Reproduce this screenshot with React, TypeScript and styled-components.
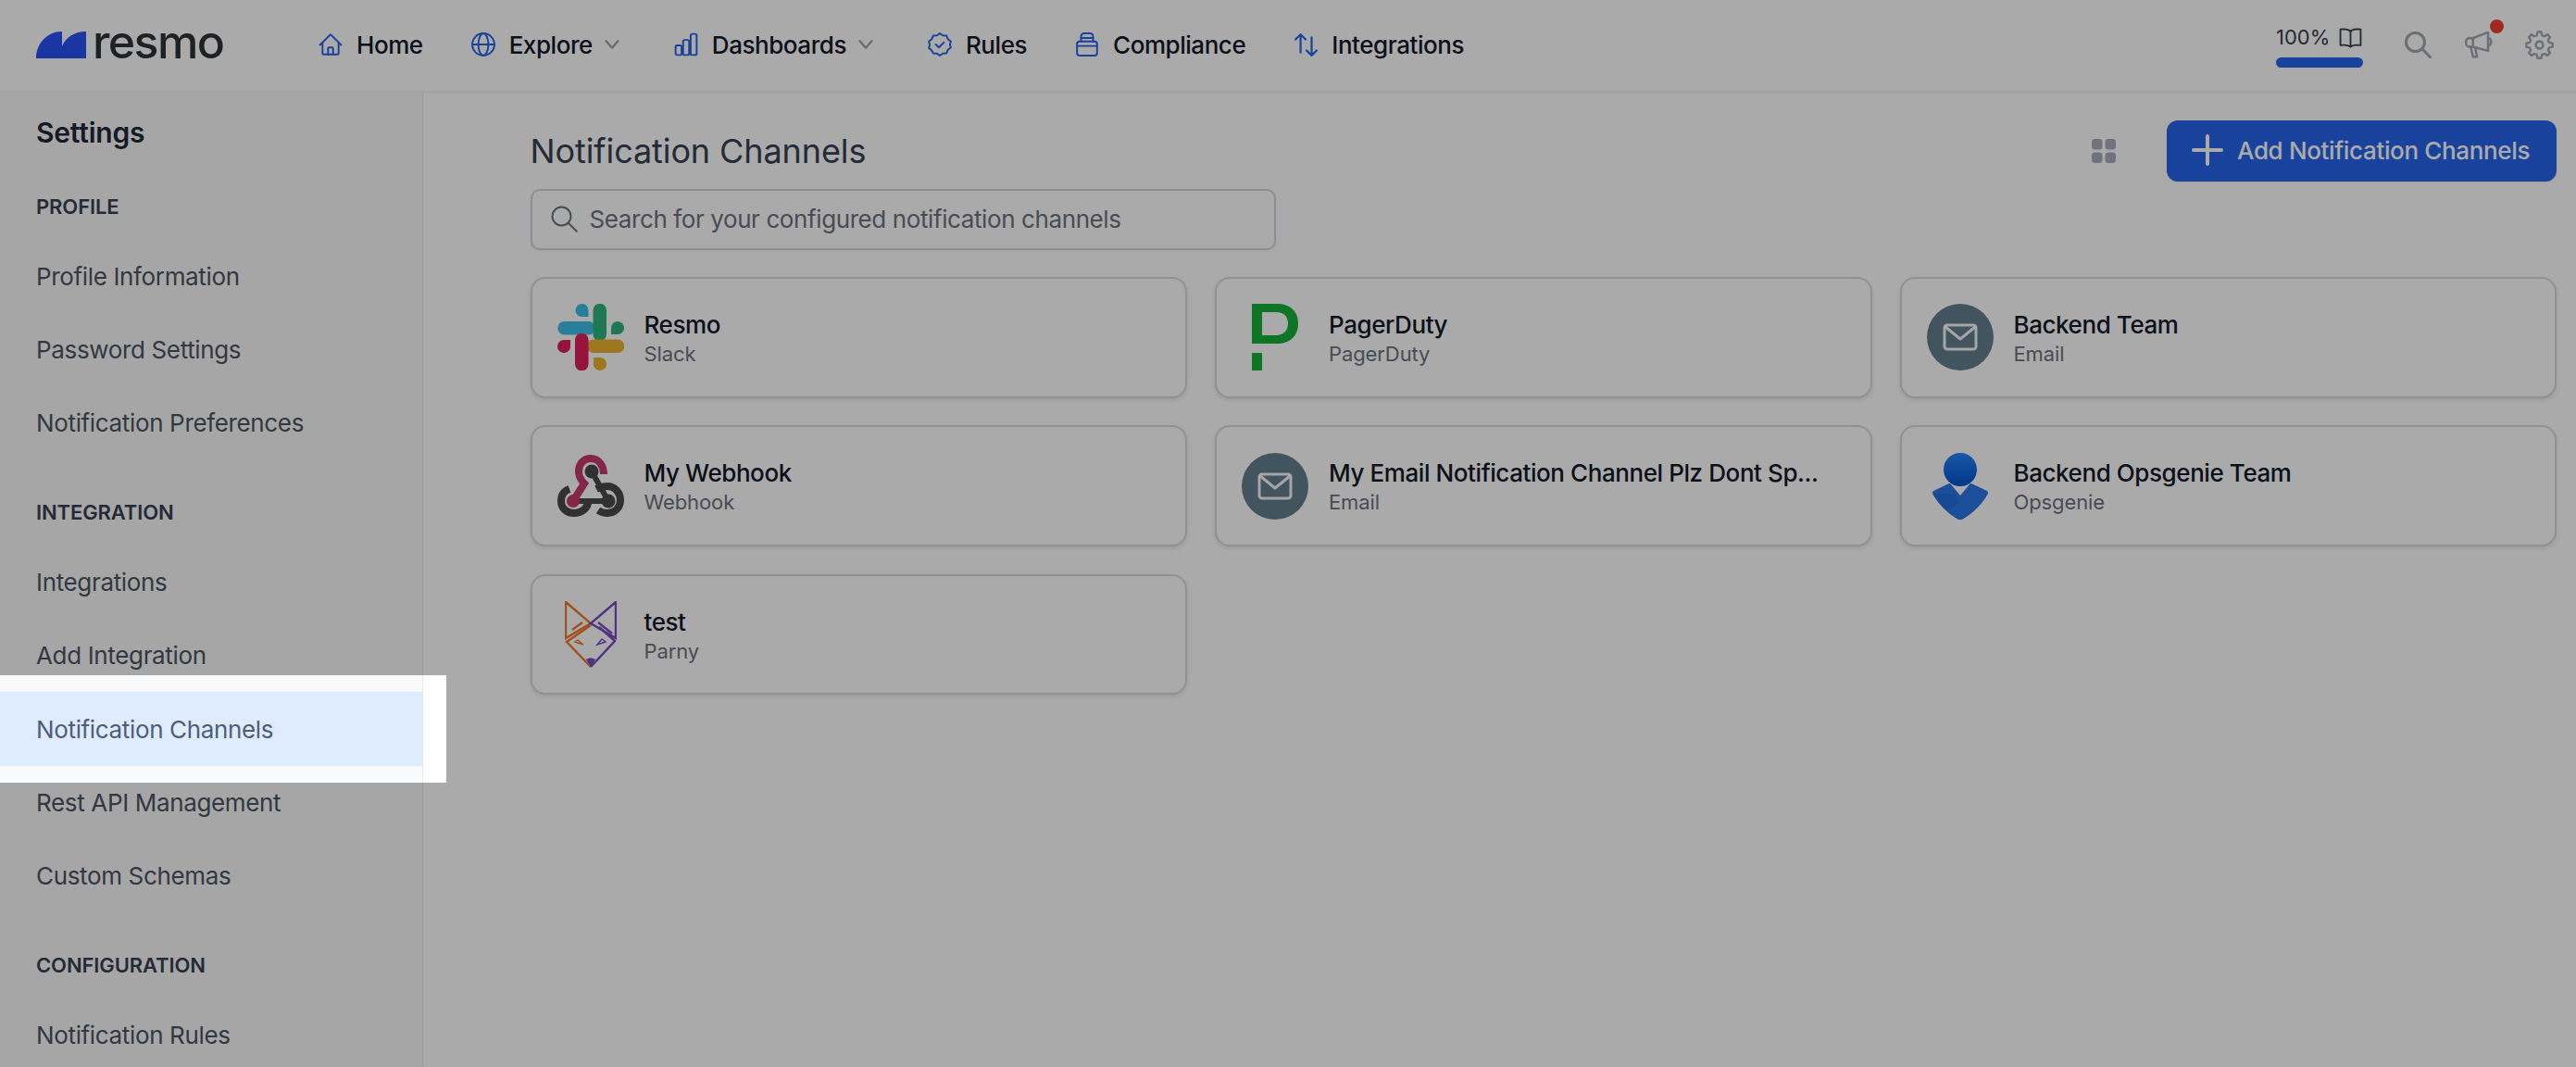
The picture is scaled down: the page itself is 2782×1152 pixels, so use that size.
import React from "react";
import styled, { createGlobalStyle } from "styled-components";

const Global = createGlobalStyle`
  html, body { margin: 0; padding: 0; background: #fff; }
  * { box-sizing: border-box; }
  body { font-family: Inter, "Noto Sans", sans-serif; }
`;

const Page = styled.div`
  position: relative;
  width: 2782px;
  height: 1152px;
  overflow: hidden;
  background: #fff;
  display: flex;
  flex-direction: column;
`;

const Spotlight = styled.div`
  position: absolute;
  left: 0;
  top: 729px;
  width: 482px;
  height: 116px;
  box-shadow: 0 0 0 4000px rgba(0, 0, 0, 0.335);
  pointer-events: none;
`;

const Header = styled.header`
  flex: 0 0 100px;
  display: flex;
  align-items: center;
  padding: 0 24px 2px 39px;
  border-bottom: 2px solid #f3f4f6;
`;

const Logo = styled.div`
  display: flex;
  align-items: center;
  gap: 7px;
  width: 305px;
  height: 60px;
`;

const LogoText = styled.span`
  font-size: 50px;
  font-weight: 500;
  line-height: 1;
  letter-spacing: -1.6px;
  color: #2f3437;
  position: relative;
  top: -3px;
`;

const Nav = styled.nav`
  display: flex;
  align-items: center;
  gap: 52px;
`;

const NavItem = styled.a`
  display: flex;
  align-items: center;
  gap: 15px;
  font-size: 26px;
  font-weight: 500;
  letter-spacing: -0.45px;
  color: #111827;
  white-space: nowrap;
  svg { flex: none; }
`;

const Chevron = styled.svg`
  margin-left: -5px;
  margin-right: 4px;
`;

const HeaderRight = styled.div`
  margin-left: auto;
  display: flex;
  align-items: center;
`;

const Usage = styled.div`
  width: 94px;
  display: flex;
  flex-direction: column;
  gap: 9px;
  margin-right: 44px;
  position: relative;
  top: 2px;
`;

const UsageTop = styled.div`
  display: flex;
  align-items: center;
  justify-content: space-between;
  font-size: 22px;
  line-height: 24px;
  color: #374151;
  padding-right: 1px;
`;

const UsageBar = styled.div`
  height: 11px;
  border-radius: 6px;
  background: #2563eb;
`;

const IconButton = styled.div<{ $mr: number }>`
  position: relative;
  display: flex;
  color: #a3a8b2;
  margin-right: ${(p) => p.$mr}px;
`;

const Dot = styled.span`
  position: absolute;
  right: -12px;
  top: -12px;
  width: 15px;
  height: 15px;
  border-radius: 50%;
  background: #ef4030;
`;

const Body = styled.div`
  flex: 1;
  min-height: 0;
  display: flex;
`;

const Sidebar = styled.aside`
  flex: 0 0 457px;
  background: #f9fafb;
  border-right: 1px solid #e5e7eb;
  padding-top: 25px;
`;

const SideTitle = styled.div`
  padding-left: 39px;
  font-size: 30px;
  line-height: 36px;
  font-weight: 600;
  letter-spacing: -0.2px;
  color: #1f2937;
  margin-bottom: 47px;
`;

const SideHeading = styled.div<{ $first?: boolean }>`
  padding: ${(p) => (p.$first ? "0" : "42px")} 0 21px 39px;
  font-size: 22px;
  line-height: 30px;
  font-weight: 600;
  letter-spacing: -0.1px;
  color: #374151;
`;

const SideItem = styled.div<{ $active?: boolean }>`
  height: 79.1px;
  display: flex;
  align-items: center;
  padding-left: 39px;
  font-size: 26px;
  letter-spacing: -0.35px;
  color: ${(p) => (p.$active ? "#4b5f7a" : "#4b5563")};
  background: ${(p) => (p.$active ? "#dfebfe" : "transparent")};
`;

const Main = styled.main`
  flex: 1;
  min-width: 0;
  padding: 30px 21px 0 115.5px;
`;

const TitleRow = styled.div`
  display: flex;
  align-items: center;
  height: 66px;
`;

const Title = styled.h1`
  margin: 0;
  font-size: 36px;
  font-weight: 400;
  letter-spacing: -0.1px;
  color: #374151;
`;

const GridToggle = styled.svg`
  margin-left: auto;
  margin-right: 55px;
  color: #a8adba;
`;

const AddButton = styled.button`
  width: 421px;
  height: 66px;
  display: flex;
  align-items: center;
  gap: 15px;
  padding: 0 0 2px 27px;
  border: 0;
  border-radius: 12px;
  background: #2563eb;
  color: #fff;
  font: 500 26px Inter, sans-serif;
  letter-spacing: -0.35px;
  box-shadow: 0 1px 2px rgba(0, 0, 0, 0.08);
  white-space: nowrap;
`;

const Search = styled.div`
  width: 805px;
  height: 66px;
  margin-top: 8px;
  display: flex;
  align-items: center;
  gap: 13px;
  padding: 0 19px 2px;
  border: 2px solid #d1d5db;
  border-radius: 10px;
  box-shadow: 0 1px 2px rgba(0, 0, 0, 0.05);
  font-size: 26px;
  letter-spacing: -0.4px;
  color: #6b7280;
  svg { color: #6b7280; flex: none; }
`;

const Cards = styled.div`
  margin-top: 29px;
  display: grid;
  grid-template-columns: repeat(3, 1fr);
  grid-auto-rows: 130.6px;
  gap: 29.8px 30px;
`;

const Card = styled.div`
  display: flex;
  align-items: center;
  gap: 22px;
  padding: 0 27px;
  border: 2px solid #d7dae0;
  border-radius: 16px;
  box-shadow: 0 2px 4px rgba(0, 0, 0, 0.1);
  background: #fff;
  min-width: 0;
`;

const LogoBox = styled.div`
  flex: 0 0 72px;
  height: 72px;
  display: flex;
  align-items: center;
  justify-content: center;
`;

const MailCircle = styled.div`
  width: 72px;
  height: 72px;
  border-radius: 50%;
  background: #637e8d;
  display: flex;
  align-items: center;
  justify-content: center;
  color: #fff;
`;

const CardText = styled.div`
  min-width: 0;
  display: flex;
  flex-direction: column;
  gap: 1px;
  padding-top: 2px;
`;

const CardName = styled.div`
  font-size: 26px;
  line-height: 32px;
  font-weight: 500;
  letter-spacing: -0.42px;
  color: #111827;
  white-space: nowrap;
`;

const CardType = styled.div`
  font-size: 22px;
  line-height: 28px;
  letter-spacing: -0.1px;
  color: #6b7280;
`;

const Ico: React.FC<{ size?: number; sw?: number; color?: string; children: React.ReactNode }> = ({
  size = 26,
  sw = 1.8,
  color = "#2563eb",
  children,
}) => (
  <svg width={size} height={size} viewBox="0 0 24 24" fill="none" stroke={color} strokeWidth={sw} strokeLinecap="round" strokeLinejoin="round">
    {children}
  </svg>
);

const ChevronDown = () => (
  <Chevron width="22" height="22" viewBox="0 0 24 24" fill="none" stroke="#9ca3af" strokeWidth="2.6" strokeLinecap="round" strokeLinejoin="round">
    <path d="M5 8l7 8 7-8" />
  </Chevron>
);

const Mail = () => (
  <MailCircle>
    <svg width="38" height="30" viewBox="0 0 38 30" fill="none" stroke="#ffffff" strokeWidth="3" strokeOpacity="0.95" strokeLinecap="round" strokeLinejoin="round">
      <rect x="2" y="2" width="34" height="26" rx="3" />
      <path d="M3 4l16 13L35 4" />
    </svg>
  </MailCircle>
);

const Slack = () => (
  <svg width="72" height="72" viewBox="0 0 72 72">
    <path fill="#3bbfe8" d="M26 0a7 7 0 1 0 0 14h7V7a7 7 0 0 0-7-7zM7 19a7 7 0 0 0 0 14.500h26a7 7 0 0 0 0-14.500z" transform="translate(0.500 0)" />
    <path fill="#2eb67d" d="M72 26a7 7 0 1 0-14 0v7h7a7 7 0 0 0 7-7zM53 7a7 7 0 0 0-14.500 0v26a7 7 0 0 0 14.500 0z" />
    <path fill="#ecb22e" d="M46 72a7 7 0 1 0 0-14h-7v7a7 7 0 0 0 7 7zM65 53a7 7 0 0 0 0-14.500H39a7 7 0 0 0 0 14.500z" />
    <path fill="#e01e5a" d="M0 46a7 7 0 1 0 14 0v-7H7a7 7 0 0 0-7 7zM19 65a7 7 0 0 0 14.500 0V39a7 7 0 0 0-14.500 0z" />
  </svg>
);

const PagerDuty = () => (
  <svg width="50" height="72" viewBox="0 0 50 72">
    <path fill="#16b03a" fillRule="evenodd" d="M0 0h27c14 0 23 8 23 21 0 14-9 22-23 22H0zM11 9v25h15c8 0 13-5 13-13S34 9 26 9z" />
    <path fill="#16b03a" d="M0 53h11v19H0z" />
  </svg>
);

const Webhook = () => (
  <svg width="72" height="68" viewBox="0 0 72 68" fill="none" strokeLinecap="butt">
    <path d="M37 18L55 50H20" stroke="#4a4a4a" strokeWidth="6" />
    <circle cx="37" cy="18" r="7.500" fill="#4a4a4a" />
    <circle cx="55" cy="50" r="7.500" fill="#4a4a4a" />
    <path d="M13 37C7 39 4 44 4 50c0 8 6 13 14 13s14-5 15-11" stroke="#4a4a4a" strokeWidth="8" />
    <path d="M42 37c4-2 8-3 12-3 8 0 14 7 14 15s-6 14-14 14c-4 0-7-1-10-3" stroke="#4a4a4a" strokeWidth="8" />
    <path d="M50 21C50 11 44 4 36 4S23 10 23 18c0 6 3 10 6 13L17 50" stroke="#c73a6c" strokeWidth="8" />
    <circle cx="17" cy="50" r="7" fill="#c73a6c" />
  </svg>
);

const Opsgenie = () => (
  <svg width="60" height="72" viewBox="0 0 60 72">
    <defs>
      <linearGradient id="ops" x1="0" y1="0" x2="0" y2="1">
        <stop offset="0" stopColor="#2684ff" />
        <stop offset="1" stopColor="#0052cc" />
      </linearGradient>
    </defs>
    <circle cx="30" cy="18" r="18" fill="url(#ops)" />
    <path fill="#2a75e8" d="M1 41l17-8c1 0 2 0 2 1l10 12 10-12c0-1 1-1 2-1l17 8c1 1 1 2 1 3-6 11-16 21-28 28-1 1-3 1-4 0C16 65 6 55 0 44c0-1 0-2 1-3z" />
    <path fill="#1c5fcf" d="M1 44c3 5 8 12 14 18l14-8-5-10z" opacity="0.35" />
  </svg>
);

const Parny = () => (
  <svg width="56" height="72" viewBox="0 0 56 72" fill="none" strokeWidth="2.400" strokeLinejoin="miter">
    <path d="M1 1l27 23L1 40z" stroke="#f0782c" />
    <path d="M19 23L8 31" stroke="#f0782c" />
    <path d="M28 26L2 44l26 27" stroke="#f0782c" />
    <path d="M55 1L28 24l27 16z" stroke="#7a4bc4" />
    <path d="M36 23l15 12" stroke="#7a4bc4" />
    <path d="M37 28l17 15-26 28" stroke="#7a4bc4" />
    <path d="M11 44l9 3-6-5z" stroke="#f0782c" strokeWidth="1.400" />
    <path d="M44 44l-9 3 5-6z" stroke="#7a4bc4" strokeWidth="1.400" />
    <path d="M28 71l-5-8c3-2 7-2 10 0z" fill="#7a4bc4" stroke="none" />
  </svg>
);

const navItems: { label: string; chevron?: boolean; icon: React.ReactNode }[] = [
  {
    label: "Home",
    icon: (
      <Ico>
        <path d="M1.500 12.500L12 2l10.500 10.500" />
        <path d="M4 10.500V21a1 1 0 0 0 1 1h14a1 1 0 0 0 1-1V10.500" />
        <path d="M9.500 22v-6a1 1 0 0 1 1-1h3a1 1 0 0 1 1 1v6" />
      </Ico>
    ),
  },
  {
    label: "Explore",
    chevron: true,
    icon: (
      <Ico>
        <circle cx="12" cy="12" r="11" />
        <path d="M1 12h22" />
        <ellipse cx="12" cy="12" rx="5" ry="11" />
      </Ico>
    ),
  },
  {
    label: "Dashboards",
    chevron: true,
    icon: (
      <Ico>
        <rect x="1.500" y="13" width="6" height="9.500" rx="1.500" />
        <rect x="9" y="7.500" width="6" height="15" rx="1.500" />
        <rect x="16.500" y="1.500" width="6" height="21" rx="1.500" />
      </Ico>
    ),
  },
  {
    label: "Rules",
    icon: (
      <Ico>
        <path d="M12 1l3 2 3.700 0.300 1.300 3.400 3 2.300-1 3 1 3-3 2.300-1.300 3.400-3.700 0.300-3 2-3-2-3.700-0.300L3.900 18 1 15.500 2 12 1 9l2.900-2.300L5.300 3.300 9 3z" />
        <path d="M8 12l3 3 5-5" />
      </Ico>
    ),
  },
  {
    label: "Compliance",
    icon: (
      <Ico>
        <path d="M6 9V4a3 3 0 0 1 3-3h6a3 3 0 0 1 3 3v5" />
        <path d="M6 5.500h12" />
        <rect x="2" y="9" width="20" height="14" rx="2.500" />
        <path d="M2 13.500h20" />
      </Ico>
    ),
  },
  {
    label: "Integrations",
    icon: (
      <Ico sw={2}>
        <path d="M7 20V2M2 7l5-5 5 5" />
        <path d="M18 5v18M13 18l5 5 5-5" />
      </Ico>
    ),
  },
];

const sections: { heading: string; items: string[] }[] = [
  { heading: "PROFILE", items: ["Profile Information", "Password Settings", "Notification Preferences"] },
  { heading: "INTEGRATION", items: ["Integrations", "Add Integration", "Notification Channels", "Rest API Management", "Custom Schemas"] },
  { heading: "CONFIGURATION", items: ["Notification Rules"] },
];

const channels: { name: string; type: string; logo: React.ReactNode }[] = [
  { name: "Resmo", type: "Slack", logo: <Slack /> },
  { name: "PagerDuty", type: "PagerDuty", logo: <PagerDuty /> },
  { name: "Backend Team", type: "Email", logo: <Mail /> },
  { name: "My Webhook", type: "Webhook", logo: <Webhook /> },
  { name: "My Email Notification Channel Plz Dont Sp...", type: "Email", logo: <Mail /> },
  { name: "Backend Opsgenie Team", type: "Opsgenie", logo: <Opsgenie /> },
  { name: "test", type: "Parny", logo: <Parny /> },
];

export default function App() {
  return (
    <Page>
      <Global />
      <Header>
        <Logo>
          <svg width="54" height="29" viewBox="0 0 54 29">
            <path fill="#2851f5" d="M0 29C0 13 12 0 28 0v16C32 6 42 0 54 0v29z" />
          </svg>
          <LogoText>resmo</LogoText>
        </Logo>
        <Nav>
          {navItems.map((n) => (
            <NavItem key={n.label}>
              {n.icon}
              {n.label}
              {n.chevron && <ChevronDown />}
            </NavItem>
          ))}
        </Nav>
        <HeaderRight>
          <Usage>
            <UsageTop>
              100%
              <Ico size={25} color="#374151">
                <path d="M12 5.500C10 3.500 6 3 1.500 3.500V20c4.500-.5 8.500 0 10.500 1.500 2-1.500 6-2 10.500-1.500V3.500C18 3 14 3.500 12 5.500z" />
                <path d="M12 5.500v16" />
              </Ico>
            </UsageTop>
            <UsageBar />
          </Usage>
          <IconButton $mr={36}>
            <svg width="30" height="30" viewBox="0 0 24 24" fill="none" stroke="currentColor" strokeWidth="2.400" strokeLinecap="round">
              <circle cx="10" cy="10" r="8" />
              <path d="M16 16l7 7" />
            </svg>
          </IconButton>
          <IconButton $mr={35}>
            <svg width="30" height="30" viewBox="0 0 24 24" fill="none" stroke="currentColor" strokeWidth="2" strokeLinecap="round" strokeLinejoin="round">
              <path d="M20 1.500L7 6.500H4a3 3 0 0 0-3 3v1.500a3 3 0 0 0 3 3h3l13 3.500z" />
              <path d="M20.500 6.500a3.500 3.500 0 0 1 0 6.500" />
              <path d="M7 6.500v7.500" />
              <path d="M5 14l2 8.500h3.500L9 15" />
            </svg>
            <Dot />
          </IconButton>
          <IconButton $mr={0}>
            <svg width="31" height="31" viewBox="0 0 24 24" fill="none" stroke="currentColor" strokeWidth="2" strokeLinecap="round" strokeLinejoin="round">
              <path d="M10.300 1.800h3.400l.6 3 2.300 1 2.600-1.700 2.400 2.400-1.700 2.600 1 2.300 3 .6v3.400l-3 .6-1 2.300 1.700 2.600-2.400 2.400-2.600-1.700-2.300 1-.6 3h-3.400l-.6-3-2.300-1-2.600 1.700-2.400-2.400 1.700-2.600-1-2.300-3-.6v-3.400l3-.6 1-2.300-1.700-2.600 2.400-2.400 2.600 1.700 2.300-1z" transform="translate(12 12) scale(0.92) translate(-12 -13.600)" />
              <circle cx="12" cy="12" r="3" />
            </svg>
          </IconButton>
        </HeaderRight>
      </Header>
      <Body>
        <Sidebar>
          <SideTitle>Settings</SideTitle>
          {sections.map((s, i) => (
            <div key={s.heading}>
              <SideHeading $first={i === 0}>{s.heading}</SideHeading>
              {s.items.map((it) => (
                <SideItem key={it} $active={it === "Notification Channels"}>
                  {it}
                </SideItem>
              ))}
            </div>
          ))}
        </Sidebar>
        <Main>
          <TitleRow>
            <Title>Notification Channels</Title>
            <GridToggle width="26" height="26" viewBox="0 0 26 26" fill="currentColor">
              <rect x="0" y="0" width="11.500" height="11.500" rx="3.500" />
              <rect x="14.500" y="0" width="11.500" height="11.500" rx="3.500" />
              <rect x="0" y="14.500" width="11.500" height="11.500" rx="3.500" />
              <rect x="14.500" y="14.500" width="11.500" height="11.500" rx="3.500" />
            </GridToggle>
            <AddButton>
              <svg width="34" height="34" viewBox="0 0 34 34" fill="none" stroke="#fff" strokeWidth="4" strokeLinecap="round">
                <path d="M17 2v30M2 17h30" />
              </svg>
              Add Notification Channels
            </AddButton>
          </TitleRow>
          <Search>
            <svg width="30" height="30" viewBox="0 0 24 24" fill="none" stroke="currentColor" strokeWidth="1.600" strokeLinecap="round">
              <circle cx="10" cy="10" r="8" />
              <path d="M16 16l7 7" />
            </svg>
            Search for your configured notification channels
          </Search>
          <Cards>
            {channels.map((c) => (
              <Card key={c.name}>
                <LogoBox>{c.logo}</LogoBox>
                <CardText>
                  <CardName>{c.name}</CardName>
                  <CardType>{c.type}</CardType>
                </CardText>
              </Card>
            ))}
          </Cards>
        </Main>
      </Body>
      <Spotlight />
    </Page>
  );
}
